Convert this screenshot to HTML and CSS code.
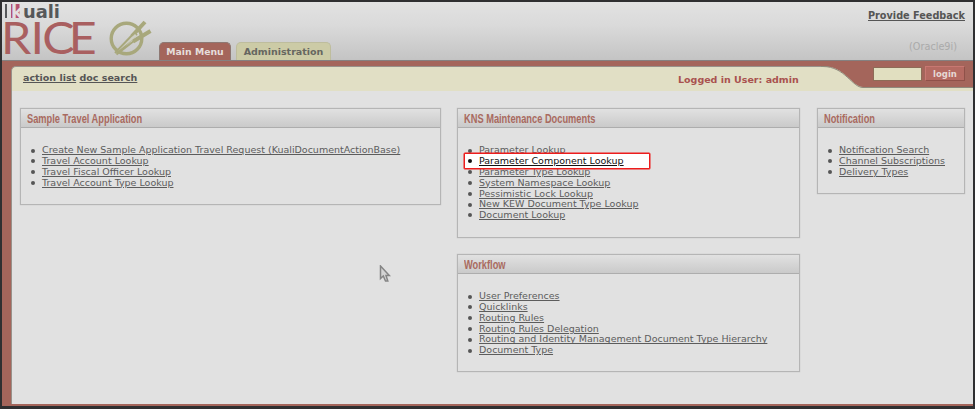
FILE: index.html
```html
<!DOCTYPE html>
<html lang="en">
<head>
<meta charset="utf-8">
<title>Kuali Rice</title>
<link rel="stylesheet" href="styles.css">
</head>
<body>
<div class="app">
  <header class="header">
    <svg class="logo" width="156" height="58" viewBox="2 2 156 58" role="img" aria-label="Kuali Rice">
      <rect x="5" y="4" width="2" height="14" fill="#56585a"/>
      <rect x="11" y="4" width="8.500" height="14" fill="#b35173"/>
      <text class="logo-kuali" x="11" y="17.5" textLength="49" lengthAdjust="spacingAndGlyphs"><tspan class="logo-k">k</tspan>uali</text>
      <text class="logo-rice" transform="scale(1.1 1)" x="0.9 27.8 38.5 62.6" y="54.5">RICE</text>
      <g fill="none" stroke="#a8a87c">
        <circle cx="126.500" cy="38.500" r="15.300" stroke-width="3.400"/>
        <path d="M132 36L145 22M133 41.500L150.500 31" stroke-width="4"/>
        <path d="M115 53L137 30M116.500 54.500L139 37M117 53L137 34" stroke-width="2"/>
      </g>
      <path d="M118 51L135 34L137 36Z" fill="#cfcfc4"/>
    </svg>
    <nav class="tabs">
      <a class="tab tab-active"><span>Main Menu</span></a>
      <a class="tab tab-admin"><span>Administration</span></a>
    </nav>
    <div class="header-info">
      <a class="feedback">Provide Feedback</a>
      <span class="build">(Oracle9i)</span>
    </div>
  </header>
  <div class="shell">
    <div class="toolbar">
      <div class="tools"><a>action list</a> <a>doc search</a></div>
      <div class="user">Logged in User: admin</div>
      <div class="login">
        <svg class="curve" width="152" height="25" viewBox="0 0 152 25">
          <path d="M0 0H152V21H42C31 21 24 0 2 0Z" fill="#a4655b"/>
          <path d="M0 .5H2C24 .5 31 21.500 42 21.500H152" fill="none" stroke="#8f8a7c"/>
        </svg>
        <input class="login-name" aria-label="User name">
        <button class="login-button">login</button>
      </div>
    </div>
    <main class="columns">
      <div class="column">
        <section class="card card-travel">
          <h2><span>Sample Travel Application</span></h2>
          <ul>
            <li><a>Create New Sample Application Travel Request (KualiDocumentActionBase)</a></li>
            <li><a>Travel Account Lookup</a></li>
            <li><a>Travel Fiscal Officer Lookup</a></li>
            <li><a>Travel Account Type Lookup</a></li>
          </ul>
        </section>
      </div>
      <div class="column">
        <section class="card card-kns">
          <h2><span>KNS Maintenance Documents</span></h2>
          <ul>
            <li><a>Parameter Lookup</a></li>
            <li class="highlight"><a>Parameter Component Lookup</a></li>
            <li><a>Parameter Type Lookup</a></li>
            <li><a>System Namespace Lookup</a></li>
            <li><a>Pessimistic Lock Lookup</a></li>
            <li><a>New KEW Document Type Lookup</a></li>
            <li><a>Document Lookup</a></li>
          </ul>
        </section>
        <section class="card card-workflow">
          <h2><span>Workflow</span></h2>
          <ul>
            <li><a>User Preferences</a></li>
            <li><a>Quicklinks</a></li>
            <li><a>Routing Rules</a></li>
            <li><a>Routing Rules Delegation</a></li>
            <li><a>Routing and Identity Management Document Type Hierarchy</a></li>
            <li><a>Document Type</a></li>
          </ul>
        </section>
      </div>
      <div class="column column-last">
        <section class="card card-notification">
          <h2><span>Notification</span></h2>
          <ul>
            <li><a>Notification Search</a></li>
            <li><a>Channel Subscriptions</a></li>
            <li><a>Delivery Types</a></li>
          </ul>
        </section>
      </div>
    </main>
  </div>
  <svg class="pointer" width="12" height="18" viewBox="0 0 12 18">
    <path d="M1.500 1V13.500L4.300 11L6.500 16H8.800L7 10.500H10.300Z" fill="#d4d4d4" stroke="#858585" stroke-width="1.500"/>
  </svg>
</div>
</body>
</html>
```

FILE: styles.css
```css
* {
  box-sizing: border-box;
}

body {
  margin: 0;
  background: #2f2f31;
  font-family: "DejaVu Sans", Verdana, sans-serif;
  font-size: 9.5px;
  color: #5c5c5c;
}

a {
  text-decoration: underline;
}

.app {
  position: relative;
  display: flex;
  flex-direction: column;
  width: 975px;
  height: 409px;
  border: 2px solid #2f2f31;
  border-bottom-width: 3px;
  overflow: hidden;
}

.header {
  display: flex;
  flex: none;
  height: 59px;
  background: linear-gradient(#e2e2e2, #dadada 40%, #c4c4c4);
  border-bottom: 1px solid #858080;
}

.logo {
  flex: none;
  overflow: visible;
}

.logo-kuali {
  font: bold 17px "DejaVu Sans", sans-serif;
  fill: #56585a;
}

.logo-k {
  fill: #e3dfe1;
}

.logo-rice {
  font: 400 44px Lato, sans-serif;
  fill: #a95f60;
}

.tabs {
  display: flex;
  align-items: flex-end;
  gap: 5px;
  margin-left: 1px;
}

.tab {
  display: flex;
  align-items: center;
  justify-content: center;
  height: 18px;
  border: 1px solid #8e7873;
  border-bottom: 0;
  border-radius: 5px 5px 0 0;
  font-weight: bold;
  text-decoration: none;
  white-space: nowrap;
}

.tab-active {
  width: 72px;
  background: #a4655b;
  font-size: 9.3px;
  color: #e6dedb;
}

.tab-admin {
  width: 95px;
  background: #cccba6;
  border-color: #bebd9d;
  color: #666660;
}

.header-info {
  display: flex;
  flex-direction: column;
  align-items: flex-end;
  margin-left: auto;
  padding: 8px 8px 0 0;
}

.feedback {
  font-size: 9.7px;
  font-weight: bold;
  line-height: 12px;
  color: #555;
}

.build {
  margin: 19px 8px 0 0;
  font-size: 9.7px;
  line-height: 12px;
  color: #aaa;
}

.shell {
  flex: 1;
  display: flex;
  flex-direction: column;
  padding: 5px 0 2px 9px;
  background: #a4655b;
}

.toolbar {
  display: flex;
  flex: none;
  height: 25px;
  background: #e1dfc5;
  border-top: 1px solid #98918a;
  border-left: 1px solid #98918a;
  border-radius: 5px 0 0 0;
}

.tools {
  width: 666px;
  padding: 5px 0 0 11px;
  font-size: 9.5px;
  font-weight: bold;
  line-height: 12px;
  color: #555;
}

.user {
  width: 144px;
  padding-top: 7px;
  font-weight: bold;
  line-height: 12px;
  white-space: nowrap;
  color: #a9524f;
}

.login {
  position: relative;
  display: flex;
  flex: 1;
  align-items: flex-start;
  gap: 3px;
  margin-top: -1px;
  padding-left: 51px;
}

.curve {
  position: absolute;
  top: 0;
  right: 0;
}

.login-name {
  position: relative;
  width: 49px;
  height: 14px;
  margin-top: 1px;
  padding: 0 2px;
  border: 1px solid #8d6c57;
  background: #e1dfc0;
}

.login-button {
  position: relative;
  width: 40px;
  height: 15px;
  padding: 1px 0 0;
  border: 1px solid;
  border-color: #c87872 #8f5149 #8f5149 #c87872;
  background: #b56a62;
  font: bold 8.5px/12px "DejaVu Sans", sans-serif;
  color: #e6d8d5;
}

.columns {
  flex: 1;
  display: grid;
  grid-template-columns: 421px 343px 149px;
  column-gap: 16px;
  padding: 17px 7px 0 8px;
  border-left: 1px solid #98918a;
  background: #e1e1e1;
}

.column {
  display: flex;
  flex-direction: column;
  gap: 16px;
}

.column-last {
  padding-left: 1px;
}

.card {
  border: 1px solid #b5b5b5;
  box-shadow: 0 0 1px #b5b5b5;
}

.card-travel {
  height: 97px;
}

.card-kns {
  height: 130px;
}

.card-workflow {
  height: 118px;
}

.card-notification {
  height: 86px;
}

.card h2 {
  height: 19px;
  margin: 0;
  padding-left: 6px;
  border-bottom: 1px solid #adadad;
  background: linear-gradient(#e1e1e1, #cacaca);
  font: bold 12px/20px "Liberation Sans", Arial, sans-serif;
  color: #a96a5f;
}

.card h2 span {
  display: inline-block;
  white-space: nowrap;
  transform: scaleX(.773);
  transform-origin: left;
}

.card ul {
  margin: 0;
  padding: 17.3px 0 0 21px;
  list-style: none;
}

.card li {
  position: relative;
  height: 10.8px;
  line-height: 10.8px;
  white-space: nowrap;
}

.card li::before {
  content: "";
  position: absolute;
  left: -11px;
  top: 3.4px;
  width: 4px;
  height: 4px;
  border-radius: 50%;
  background: #555;
}

.card li.highlight {
  z-index: 1;
  width: 186px;
  height: 16px;
  margin: -3px 0 -2.2px -15px;
  padding-left: 14px;
  border: 1px solid #ed1c1c;
  box-shadow: 0 0 0 .5px #ed1c1c;
  border-radius: 1px;
  background: #fff;
  line-height: 14px;
  color: #111;
}

.card li.highlight::before {
  left: 3px;
  top: 5px;
  background: #111;
}

.pointer {
  position: absolute;
  left: 377px;
  top: 263px;
}
```
